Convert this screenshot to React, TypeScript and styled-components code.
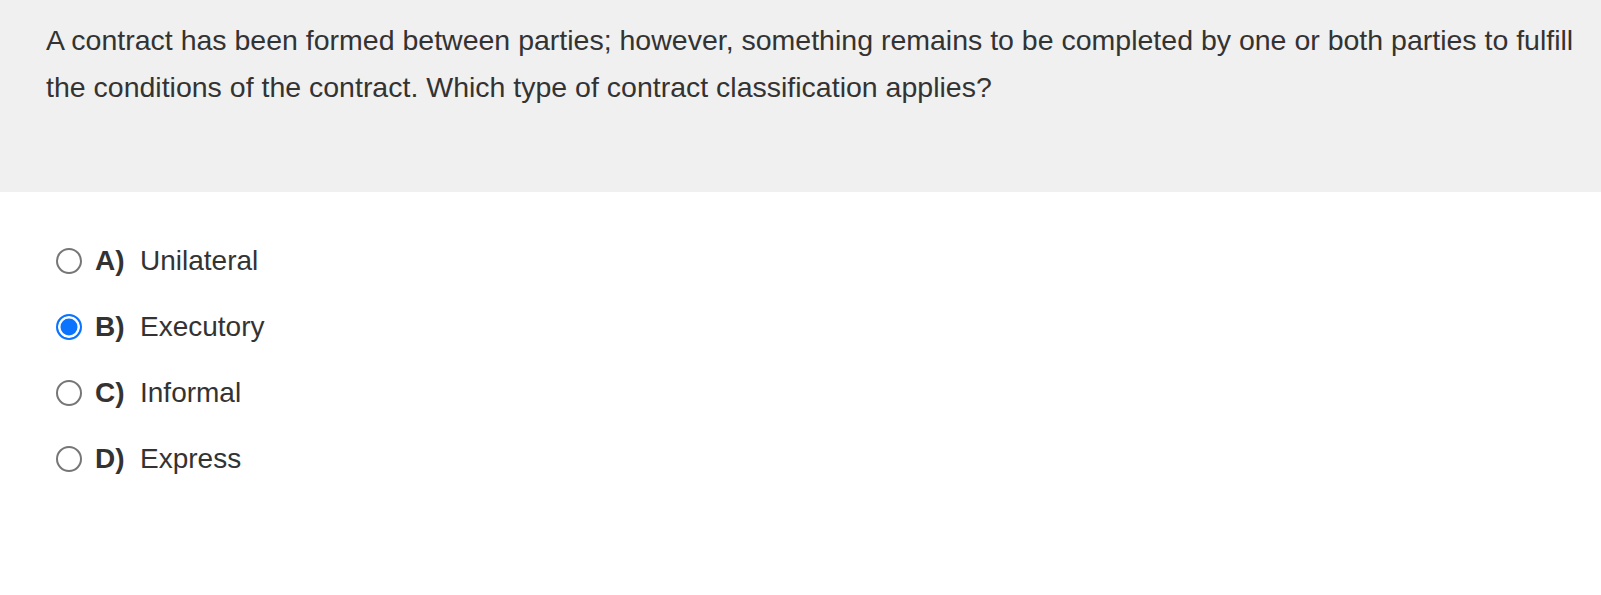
import styled, {createGlobalStyle} from 'styled-components'

const Global = createGlobalStyle`
    html, body {
        margin: 0;
        padding: 0;
        background: #ffffff;
    }
    body {
        font-family: 'Liberation Sans', Arial, Helvetica, sans-serif;
        color: #333333;
    }
`

const Question = styled.div`
    background: #f0f0f0;
    padding: 17px 20px 81px 46px;
    font-size: 28.5px;
    line-height: 47px;
    color: #333333;
`

const Options = styled.div`
    display: flex;
    flex-direction: column;
    padding: 45px 0 0 56px;
    gap: 18px;
`

const Option = styled.label`
    display: flex;
    align-items: center;
    height: 48px;
    font-size: 28px;
    color: #333333;
    cursor: pointer;
`

const Radio = styled.span<{$checked?: boolean}>`
    box-sizing: border-box;
    width: 26px;
    height: 26px;
    border-radius: 50%;
    flex-shrink: 0;
    margin-right: 13px;
    border: ${(p) => (p.$checked ? '2px solid #0a74ff' : '2px solid #767676')};
    background: ${(p) => (p.$checked ? '#0a74ff' : '#ffffff')};
    box-shadow: ${(p) => (p.$checked ? 'inset 0 0 0 2.5px #ffffff' : 'none')};
`

const Letter = styled.span`
    font-weight: 700;
    width: 45px;
`

const choices = [
    {key: 'A)', text: 'Unilateral'},
    {key: 'B)', text: 'Executory'},
    {key: 'C)', text: 'Informal'},
    {key: 'D)', text: 'Express'},
]

function App() {
    const picked = 1
    return (
        <>
            <Global />
            <Question>
                A contract has been formed between parties; however, something remains to be completed by one or both
                parties to fulfill the conditions of the contract. Which type of contract classification applies?
            </Question>
            <Options>
                {choices.map((c, i) => (
                    <Option key={c.key}>
                        <Radio $checked={i == picked} />
                        <Letter>{c.key}</Letter>
                        <span>{c.text}</span>
                    </Option>
                ))}
            </Options>
        </>
    )
}

export default App
